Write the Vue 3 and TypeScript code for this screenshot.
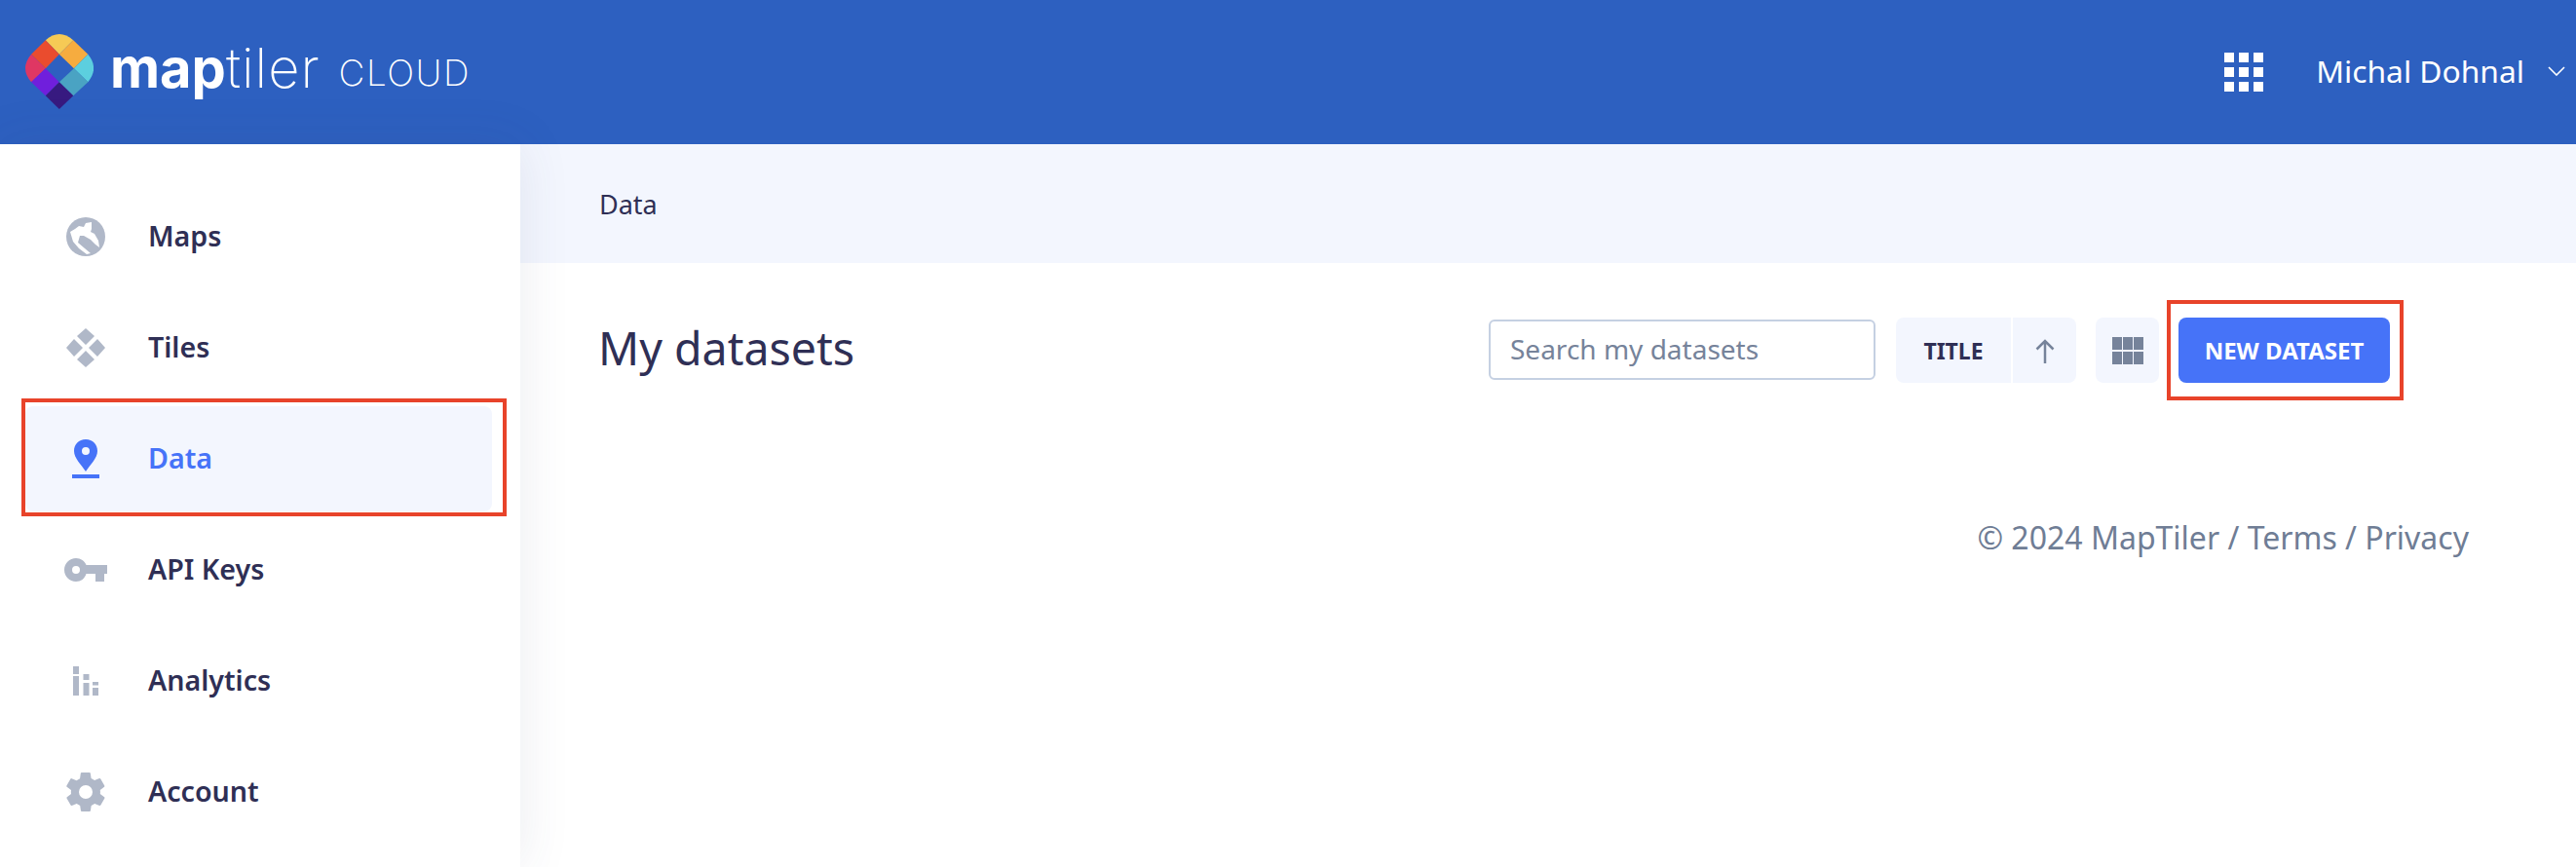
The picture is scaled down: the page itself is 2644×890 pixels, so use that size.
<script setup lang="ts">
interface NavItem {
  label: string
  icon: string
}

const navItems: NavItem[] = [
  { label: 'Maps', icon: 'globe' },
  { label: 'Tiles', icon: 'tiles' },
  { label: 'Data', icon: 'pin' },
  { label: 'API Keys', icon: 'key' },
  { label: 'Analytics', icon: 'bars' },
  { label: 'Account', icon: 'gear' },
]

const activeItem = 'Data'
</script>

<template>
  <div class="page">
    <header class="topbar">
      <div class="brand">
        <svg class="brand-mark" viewBox="48 43 209 230">
          <path fill="#f6ca55" d="M110 62Q152 24 195 62L152 105Z" />
          <path fill="#f6ac3f" d="M195 62L240 105L197 148L152 105Z" />
          <path fill="#ea4c2e" d="M110 62L152 105L110 148L66 105Z" />
          <path fill="#df3763" d="M66 105Q30 148 66 190L110 148Z" />
          <path fill="#5ccfdf" d="M240 105Q275 148 240 190L197 148Z" />
          <path fill="#701fdc" d="M110 148L152 190L110 232L66 190Z" />
          <path fill="#4aa3c3" d="M197 148L240 190L195 232L152 190Z" />
          <path fill="#371a80" d="M152 190L195 232L152 273L110 232Z" />
        </svg>
        <span class="wordmark"><b>map</b><span class="wordmark-thin">tiler</span></span>
        <span class="product">CLOUD</span>
      </div>
      <div class="topbar-right">
        <div class="apps">
          <i v-for="n in 9" :key="n"></i>
        </div>
        <span class="user">Michal Dohnal</span>
        <svg class="chevron" viewBox="0 0 18 10">
          <path d="M1 1l8 8 8-8" fill="none" stroke="#fff" stroke-width="1.6" />
        </svg>
      </div>
    </header>

    <div class="body">
      <aside class="sidebar">
        <nav class="nav">
          <a
            v-for="item in navItems"
            :key="item.label"
            class="nav-item"
            :class="{ active: item.label === activeItem }"
          >
            <span class="nav-icon">
              <svg v-if="item.icon === 'globe'" viewBox="0 0 40 40" width="40" height="40">
                <circle cx="20" cy="20" r="20" fill="currentColor" />
                <path fill="#fff" d="M4 15L9 12L13 9L18 10L20 6L26 5L26 12L25 15L29 17L33 24L34 31L30 28L25 23L18 19L14 19L12 26L19 32L25 37L21 38L13 32L7 25Z" />
              </svg>
              <svg v-else-if="item.icon === 'tiles'" viewBox="0 0 40 40" width="40" height="40">
                <path fill="currentColor" d="M20 0l9 8-9 9-9-9zM8 11l9 9-9 9-8-9zM32 11l8 9-8 9-9-9zM20 23l9 9-9 8-9-8z" />
              </svg>
              <svg v-else-if="item.icon === 'pin'" viewBox="0 0 28 40" width="28" height="40">
                <path fill="currentColor" fill-rule="evenodd" d="M14 0C6.800 0 2 5.400 2 12c0 7.500 7.500 14 12 21 4.500-7 12-13.500 12-21C26 5.400 21.200 0 14 0zm0 8a4 4 0 1 1 0 8 4 4 0 0 1 0-8z" />
                <rect x="0" y="36" width="28" height="4" fill="currentColor" />
              </svg>
              <svg v-else-if="item.icon === 'key'" viewBox="0 0 44 24" width="44" height="24">
                <path fill="currentColor" fill-rule="evenodd" d="M12 0c5 0 9 3 10.500 7H44v9h-3v8h-9v-8H22.500C21 21 17 24 12 24 5.400 24 0 18.600 0 12S5.400 0 12 0zm0 8a4 4 0 1 0 0 8 4 4 0 0 0 0-8z" />
              </svg>
              <svg v-else-if="item.icon === 'bars'" viewBox="0 0 27 30" width="27" height="30">
                <path fill="currentColor" d="M0 0h6v8H0zM0 10h6v20H0zM10.500 8h6v6h-6zM10.500 17h6v13h-6zM20 16h6v3.500h-6zM20 22h6v8h-6z" />
              </svg>
              <svg v-else viewBox="0 0 24 24" width="48" height="48">
                <path fill="currentColor" d="M19.400 13c.04-.33.060-.66.060-1s-.02-.67-.06-1l2.100-1.650a.5.5 0 0 0 .12-.64l-2-3.460a.5.5 0 0 0-.61-.22l-2.490 1a7.300 7.300 0 0 0-1.730-1l-.38-2.650A.49.49 0 0 0 13.900 2h-4a.49.49 0 0 0-.49.42l-.38 2.650c-.63.26-1.200.6-1.730 1l-2.490-1a.49.49 0 0 0-.61.22l-2 3.460a.49.49 0 0 0 .12.640L4.500 11c-.04.33-.07.66-.07 1s.03.67.07 1l-2.110 1.650a.5.5 0 0 0-.12.64l2 3.460c.12.22.39.3.61.22l2.490-1c.52.4 1.100.74 1.730 1l.38 2.650c.03.24.240.42.490.42h4c.25 0 .46-.18.49-.42l.38-2.650c.63-.26 1.210-.6 1.730-1l2.490 1c.23.08.49 0 .61-.22l2-3.460a.5.5 0 0 0-.12-.64zM12 15.500a3.500 3.500 0 1 1 0-7 3.500 3.500 0 0 1 0 7z" />
              </svg>
            </span>
            <span class="nav-label">{{ item.label }}</span>
          </a>
        </nav>
      </aside>

      <main class="main">
        <div class="breadcrumb">Data</div>
        <div class="content">
          <div class="toolbar">
            <h1 class="title">My datasets</h1>
            <div class="actions">
              <input class="search" type="text" placeholder="Search my datasets" />
              <div class="sort">
                <button class="sort-field">TITLE</button>
                <button class="sort-dir">
                  <svg viewBox="0 0 24 26" width="24" height="26">
                    <path d="M12 26V3M3.500 11.500L12 3l8.500 8.500" fill="none" stroke="#76839a" stroke-width="2.500" />
                  </svg>
                </button>
              </div>
              <button class="view-toggle">
                <svg viewBox="0 0 32 28" width="32" height="28">
                  <path fill="#76839a" d="M0 0h10v13H0zM11 0h10v13H11zM22 0h10v13H22zM0 15h10v13H0zM11 15h10v13H11zM22 15h10v13H22z" />
                </svg>
              </button>
              <button class="new-dataset">NEW DATASET</button>
            </div>
          </div>
          <footer class="footer">© 2024 MapTiler / Terms / Privacy</footer>
        </div>
      </main>
    </div>
  </div>
</template>

<style>
html,
body {
  margin: 0;
  background: #fff;
}
</style>

<style scoped>
.page {
  width: 2644px;
  height: 890px;
  display: flex;
  flex-direction: column;
  overflow: hidden;
  font-family: "Noto Sans", "Open Sans", sans-serif;
  color: #2f2f55;
}

.topbar {
  height: 148px;
  flex: none;
  background: #2d60c0;
  display: flex;
  align-items: center;
  justify-content: space-between;
  padding: 0 11px 0 26px;
  box-sizing: border-box;
  color: #fff;
}

.brand {
  display: flex;
  align-items: center;
}

.brand-mark {
  width: 70px;
  height: 77px;
  margin-bottom: 1px;
}

.wordmark {
  margin-left: 17px;
  font-family: Inter, sans-serif;
  font-size: 56px;
  font-weight: 200;
  line-height: 1;
  margin-top: -8px;
}

.wordmark b {
  font-weight: 700;
}

.wordmark-thin {
  letter-spacing: 1px;
}

.product {
  margin-left: 19px;
  font-family: Inter, sans-serif;
  font-size: 37px;
  font-weight: 200;
  letter-spacing: 1.500px;
}

.topbar-right {
  display: flex;
  align-items: center;
}

.apps {
  display: grid;
  grid-template-columns: repeat(3, 10px);
  grid-auto-rows: 10px;
  gap: 5px;
}

.apps i {
  background: #fff;
}

.user {
  margin-left: 54px;
  font-size: 31.750px;
  line-height: 1;
  padding-bottom: 2px;
}

.chevron {
  width: 18px;
  height: 10px;
  margin-left: 24px;
  margin-top: -2px;
}

.body {
  flex: 1;
  display: flex;
  min-height: 0;
}

.sidebar {
  width: 534px;
  flex: none;
  position: relative;
  z-index: 1;
  background: #fff;
  box-shadow: 0 0 50px rgba(60, 70, 110, 0.1);
  padding: 41px 29px 0 26px;
  box-sizing: border-box;
}

.nav {
  display: flex;
  flex-direction: column;
  gap: 6px;
}

.nav-item {
  position: relative;
  height: 108px;
  display: flex;
  align-items: center;
  border-radius: 8px;
  color: #2f2f55;
  font-size: 28.600px;
  font-weight: 600;
}

.nav-icon {
  width: 126px;
  flex: none;
  display: flex;
  justify-content: center;
  padding-right: 2px;
  box-sizing: border-box;
  color: #b0b8c8;
}

.nav-icon svg {
  display: block;
}

.nav-label {
  padding-bottom: 4px;
}

.nav-item.active {
  background: #f3f6fe;
  color: #4673f8;
}

.nav-item.active .nav-icon {
  color: #4673f8;
}

/* red annotation drawn over the screenshot */
.nav-item.active::after {
  content: "";
  position: absolute;
  inset: -8px -15px -5px -4px;
  border: 4px solid #e8432a;
  pointer-events: none;
}

.main {
  flex: 1;
  min-width: 0;
  display: flex;
  flex-direction: column;
}

.breadcrumb {
  height: 122px;
  flex: none;
  display: flex;
  align-items: center;
  padding-left: 81px;
  background: #f3f6fe;
  font-size: 27px;
}

.content {
  padding: 56px 110px 0 80px;
}

.toolbar {
  display: flex;
  align-items: center;
  justify-content: space-between;
  height: 67px;
}

.title {
  margin: 0;
  font-size: 46.500px;
  font-weight: 400;
  line-height: 1;
  padding-bottom: 5px;
}

.actions {
  display: flex;
  align-items: center;
  margin-right: 81px;
}

.search {
  width: 397px;
  height: 62px;
  box-sizing: border-box;
  border: 2px solid #c5d0e2;
  border-radius: 6px;
  padding: 0 20px 2px;
  margin-bottom: 1px;
  font: 400 28px "Noto Sans", sans-serif;
  color: #2f2f55;
  outline: none;
}

.search::placeholder {
  color: #76839a;
  opacity: 1;
}

button {
  border: 0;
  margin: 0;
  padding: 0;
  height: 67px;
  background: #f3f6fe;
  display: flex;
  align-items: center;
  justify-content: center;
  font-family: "Noto Sans", sans-serif;
}

.sort {
  display: flex;
  gap: 2px;
  margin-left: 21px;
}

.sort-field {
  width: 118px;
  border-radius: 8px 0 0 8px;
  color: #2f2f55;
  font-size: 23px;
  font-weight: 700;
}

.sort-dir {
  width: 65px;
  border-radius: 0 8px 8px 0;
}

.view-toggle {
  width: 65px;
  margin-left: 20px;
  border-radius: 8px;
}

.new-dataset {
  position: relative;
  width: 217px;
  margin-left: 20px;
  border-radius: 8px;
  background: #4673f8;
  color: #fff;
  font-size: 24px;
  font-weight: 700;
}

/* red annotation drawn over the screenshot */
.new-dataset::after {
  content: "";
  position: absolute;
  inset: -18px -14px -18px -12px;
  border: 4px solid #e8432a;
  pointer-events: none;
}

.footer {
  margin-top: 139px;
  text-align: right;
  color: #6f7d95;
  font-size: 32px;
  line-height: 40px;
}
</style>
